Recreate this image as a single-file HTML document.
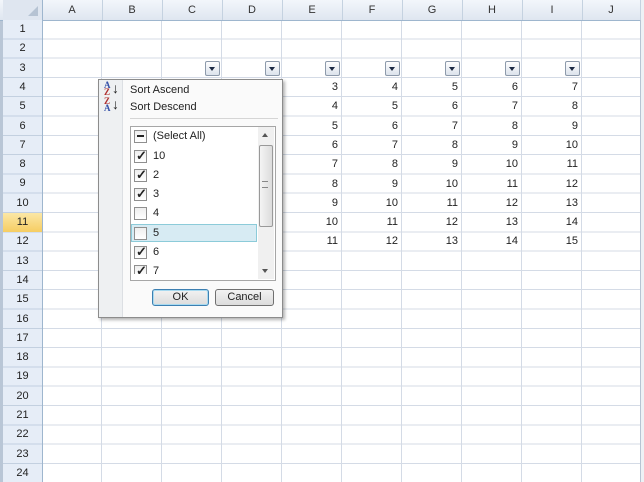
<!DOCTYPE html>
<html><head><meta charset="utf-8"><style>
body{margin:0;width:644px;height:482px;overflow:hidden;background:#fff;font-family:"Liberation Sans",sans-serif;font-size:11px;color:#222;position:relative}
.a{position:absolute}
#grid{left:42px;top:20px;width:598px;height:462px;background:
repeating-linear-gradient(to bottom,transparent 0,transparent 18.3px,#d4dbe6 18.3px,#d4dbe6 19.3px),
repeating-linear-gradient(to right,transparent 0,transparent 59px,#d4dbe6 59px,#d4dbe6 60px)}
#ch{left:0;top:0;width:640px;height:20px;background:linear-gradient(#f3f6fb,#dfe6f0);border-bottom:1px solid #9eb6ce}
#rh{left:3px;top:20px;width:39px;height:462px;background:repeating-linear-gradient(to bottom,#e6edf7 0,#e6edf7 18.3px,#c3d0e0 18.3px,#c3d0e0 19.3px);border-right:1px solid #9eb6ce}
.c{top:0;height:20px;line-height:20px;width:60px;text-align:center;border-right:1px solid #c5d2e0;font-size:11px;color:#333}
.r{left:3px;width:39px;text-align:center;font-size:11px;color:#222;height:18px;line-height:18px}
.n{width:56px;text-align:right;height:18px;line-height:18px}
.dd{width:13px;height:13px;border:1px solid #8d9aab;border-radius:2px;background:linear-gradient(#fdfdfe,#dce3ec)}
.dd:after{content:"";position:absolute;left:3px;top:5px;border:3.5px solid transparent;border-top:4px solid #1c2a44;border-bottom:0}
.cb{left:134px;width:11px;height:11px;border:1px solid #8f8f8f;background:linear-gradient(#eee,#fff)}
.ck:after{content:"✓";position:absolute;left:1px;top:-3px;font-size:13px;font-weight:bold;color:#222}
.lt{left:153px;font-size:11px;height:14px;line-height:14px}
.btn{height:15px;border:1px solid #707070;border-radius:3px;background:linear-gradient(#f2f2f2,#dcdcdc);text-align:center;line-height:15px;font-size:11px}
.ic{font-size:9px;line-height:7px;font-family:'Liberation Serif',serif;font-weight:bold}
</style></head><body>
<div class="a" style="left:0;top:0;width:3px;height:482px;background:#b9c6d6"></div>
<div class="a" id="grid"></div>
<div class="a" style="left:640px;top:0;width:4px;height:482px;background:#eef1f5;border-left:1px solid #b7c4d3"></div>
<div class="a" id="ch"></div>
<div class="a" style="left:3px;top:0;width:39px;height:20px;background:#dfe6f0;border-right:1px solid #9eb6ce"></div>
<div class="a" style="left:28px;top:6px;width:0;height:0;border-left:10px solid transparent;border-bottom:10px solid #b6c3d3"></div>
<div class="a c" style="left:42px">A</div><div class="a c" style="left:102px">B</div><div class="a c" style="left:162px">C</div><div class="a c" style="left:222px">D</div><div class="a c" style="left:282px">E</div><div class="a c" style="left:342px">F</div><div class="a c" style="left:402px">G</div><div class="a c" style="left:462px">H</div><div class="a c" style="left:522px">I</div><div class="a c" style="left:582px;width:58px">J</div>
<div class="a" id="rh"></div>
<div class="a" style="left:3px;top:213.3px;width:39px;height:18.3px;background:linear-gradient(#fbe7a6,#f6cd62)"></div>
<div class="a r" style="top:20px">1</div><div class="a r" style="top:39.3px">2</div><div class="a r" style="top:58.6px">3</div><div class="a r" style="top:77.9px">4</div><div class="a r" style="top:97.2px">5</div><div class="a r" style="top:116.5px">6</div><div class="a r" style="top:135.8px">7</div><div class="a r" style="top:155.1px">8</div><div class="a r" style="top:174.4px">9</div><div class="a r" style="top:193.7px">10</div><div class="a r" style="top:213px">11</div><div class="a r" style="top:232.3px">12</div><div class="a r" style="top:251.6px">13</div><div class="a r" style="top:270.9px">14</div><div class="a r" style="top:290.2px">15</div><div class="a r" style="top:309.5px">16</div><div class="a r" style="top:328.8px">17</div><div class="a r" style="top:348.1px">18</div><div class="a r" style="top:367.4px">19</div><div class="a r" style="top:386.7px">20</div><div class="a r" style="top:406px">21</div><div class="a r" style="top:425.3px">22</div><div class="a r" style="top:444.6px">23</div><div class="a r" style="top:463.9px">24</div>

<div class="a dd" style="left:205px;top:61px"></div><div class="a dd" style="left:265px;top:61px"></div><div class="a dd" style="left:325px;top:61px"></div><div class="a dd" style="left:385px;top:61px"></div><div class="a dd" style="left:445px;top:61px"></div><div class="a dd" style="left:505px;top:61px"></div><div class="a dd" style="left:565px;top:61px"></div>

<div class="a n" style="left:282px;top:78px">3</div><div class="a n" style="left:342px;top:78px">4</div><div class="a n" style="left:402px;top:78px">5</div><div class="a n" style="left:462px;top:78px">6</div><div class="a n" style="left:522px;top:78px">7</div>
<div class="a n" style="left:282px;top:97.3px">4</div><div class="a n" style="left:342px;top:97.3px">5</div><div class="a n" style="left:402px;top:97.3px">6</div><div class="a n" style="left:462px;top:97.3px">7</div><div class="a n" style="left:522px;top:97.3px">8</div>
<div class="a n" style="left:282px;top:116.6px">5</div><div class="a n" style="left:342px;top:116.6px">6</div><div class="a n" style="left:402px;top:116.6px">7</div><div class="a n" style="left:462px;top:116.6px">8</div><div class="a n" style="left:522px;top:116.6px">9</div>
<div class="a n" style="left:282px;top:135.9px">6</div><div class="a n" style="left:342px;top:135.9px">7</div><div class="a n" style="left:402px;top:135.9px">8</div><div class="a n" style="left:462px;top:135.9px">9</div><div class="a n" style="left:522px;top:135.9px">10</div>
<div class="a n" style="left:282px;top:155.2px">7</div><div class="a n" style="left:342px;top:155.2px">8</div><div class="a n" style="left:402px;top:155.2px">9</div><div class="a n" style="left:462px;top:155.2px">10</div><div class="a n" style="left:522px;top:155.2px">11</div>
<div class="a n" style="left:282px;top:174.5px">8</div><div class="a n" style="left:342px;top:174.5px">9</div><div class="a n" style="left:402px;top:174.5px">10</div><div class="a n" style="left:462px;top:174.5px">11</div><div class="a n" style="left:522px;top:174.5px">12</div>
<div class="a n" style="left:282px;top:193.8px">9</div><div class="a n" style="left:342px;top:193.8px">10</div><div class="a n" style="left:402px;top:193.8px">11</div><div class="a n" style="left:462px;top:193.8px">12</div><div class="a n" style="left:522px;top:193.8px">13</div>
<div class="a n" style="left:282px;top:213.1px">10</div><div class="a n" style="left:342px;top:213.1px">11</div><div class="a n" style="left:402px;top:213.1px">12</div><div class="a n" style="left:462px;top:213.1px">13</div><div class="a n" style="left:522px;top:213.1px">14</div>
<div class="a n" style="left:282px;top:232.4px">11</div><div class="a n" style="left:342px;top:232.4px">12</div><div class="a n" style="left:402px;top:232.4px">13</div><div class="a n" style="left:462px;top:232.4px">14</div><div class="a n" style="left:522px;top:232.4px">15</div>

<!-- popup -->
<div class="a" style="left:98px;top:79px;width:183px;height:237px;background:#fafafa;border:1px solid #8c8c8c;box-shadow:2px 2px 3px rgba(0,0,0,.3)"></div>
<div class="a" style="left:99px;top:80px;width:23px;height:237px;background:#eef0f2;border-right:1px solid #dcdfe3"></div>
<div class="a ic" style="left:104px;top:82px"><span style="color:#3550a8">A</span><br><span style="color:#b03030">Z</span></div>
<div class="a ic" style="left:104px;top:98px"><span style="color:#b03030">Z</span><br><span style="color:#3550a8">A</span></div>
<div class="a" style="left:112px;top:80px;font-size:14px;line-height:16px">↓</div>
<div class="a" style="left:112px;top:96px;font-size:14px;line-height:16px">↓</div>
<div class="a" style="left:130px;top:84px;font-size:11px">Sort Ascend</div>
<div class="a" style="left:130px;top:101px;font-size:11px">Sort Descend</div>
<div class="a" style="left:130px;top:118px;width:148px;height:1px;background:#d5d5d5"></div>
<div class="a" style="left:130px;top:126px;width:144px;height:153px;background:#fff;border:1px solid #a6a6a6"></div>
<div class="a" style="left:131px;top:224px;width:126px;height:18px;background:#d7ebf3;border:1px solid #8ccbd9;box-sizing:border-box"></div>
<div class="a" style="left:258px;top:127px;width:16px;height:152px;background:#f0f0f0"></div>
<div class="a" style="left:259px;top:145px;width:12px;height:80px;border:1px solid #999;border-radius:2px;background:linear-gradient(to right,#f4f4f4,#dcdcdc)"></div>
<div class="a" style="left:262px;top:181px;width:6px;height:5px;border-top:1px solid #888;border-bottom:1px solid #888"></div>
<div class="a" style="left:262px;top:133px;border:3px solid transparent;border-bottom:4px solid #555;border-top:0"></div>
<div class="a" style="left:262px;top:269px;border:3px solid transparent;border-top:4px solid #555;border-bottom:0"></div>
<div class="a cb" style="top:130px"></div><div class="a" style="left:137px;top:135px;width:7px;height:2px;background:#222"></div>
<div class="a lt" style="top:129px">(Select All)</div>
<div class="a cb ck" style="top:150px"></div><div class="a lt" style="top:149px">10</div>
<div class="a cb ck" style="top:169px"></div><div class="a lt" style="top:168px">2</div>
<div class="a cb ck" style="top:188px"></div><div class="a lt" style="top:187px">3</div>
<div class="a cb" style="top:207px"></div><div class="a lt" style="top:206px">4</div>
<div class="a cb" style="top:227px"></div><div class="a lt" style="top:226px">5</div>
<div class="a cb ck" style="top:246px"></div><div class="a lt" style="top:245px">6</div>
<div class="a" style="left:131px;top:265px;width:126px;height:9px;overflow:hidden"><div class="a cb ck" style="left:3px;top:0"></div><div class="a lt" style="left:22px;top:-1px">7</div></div>
<div class="a btn" style="left:152px;top:289px;width:55px;border-color:#3c7fb1;box-shadow:inset 0 0 0 1px #a8daf0">OK</div>
<div class="a btn" style="left:215px;top:289px;width:57px">Cancel</div>
</body></html>
